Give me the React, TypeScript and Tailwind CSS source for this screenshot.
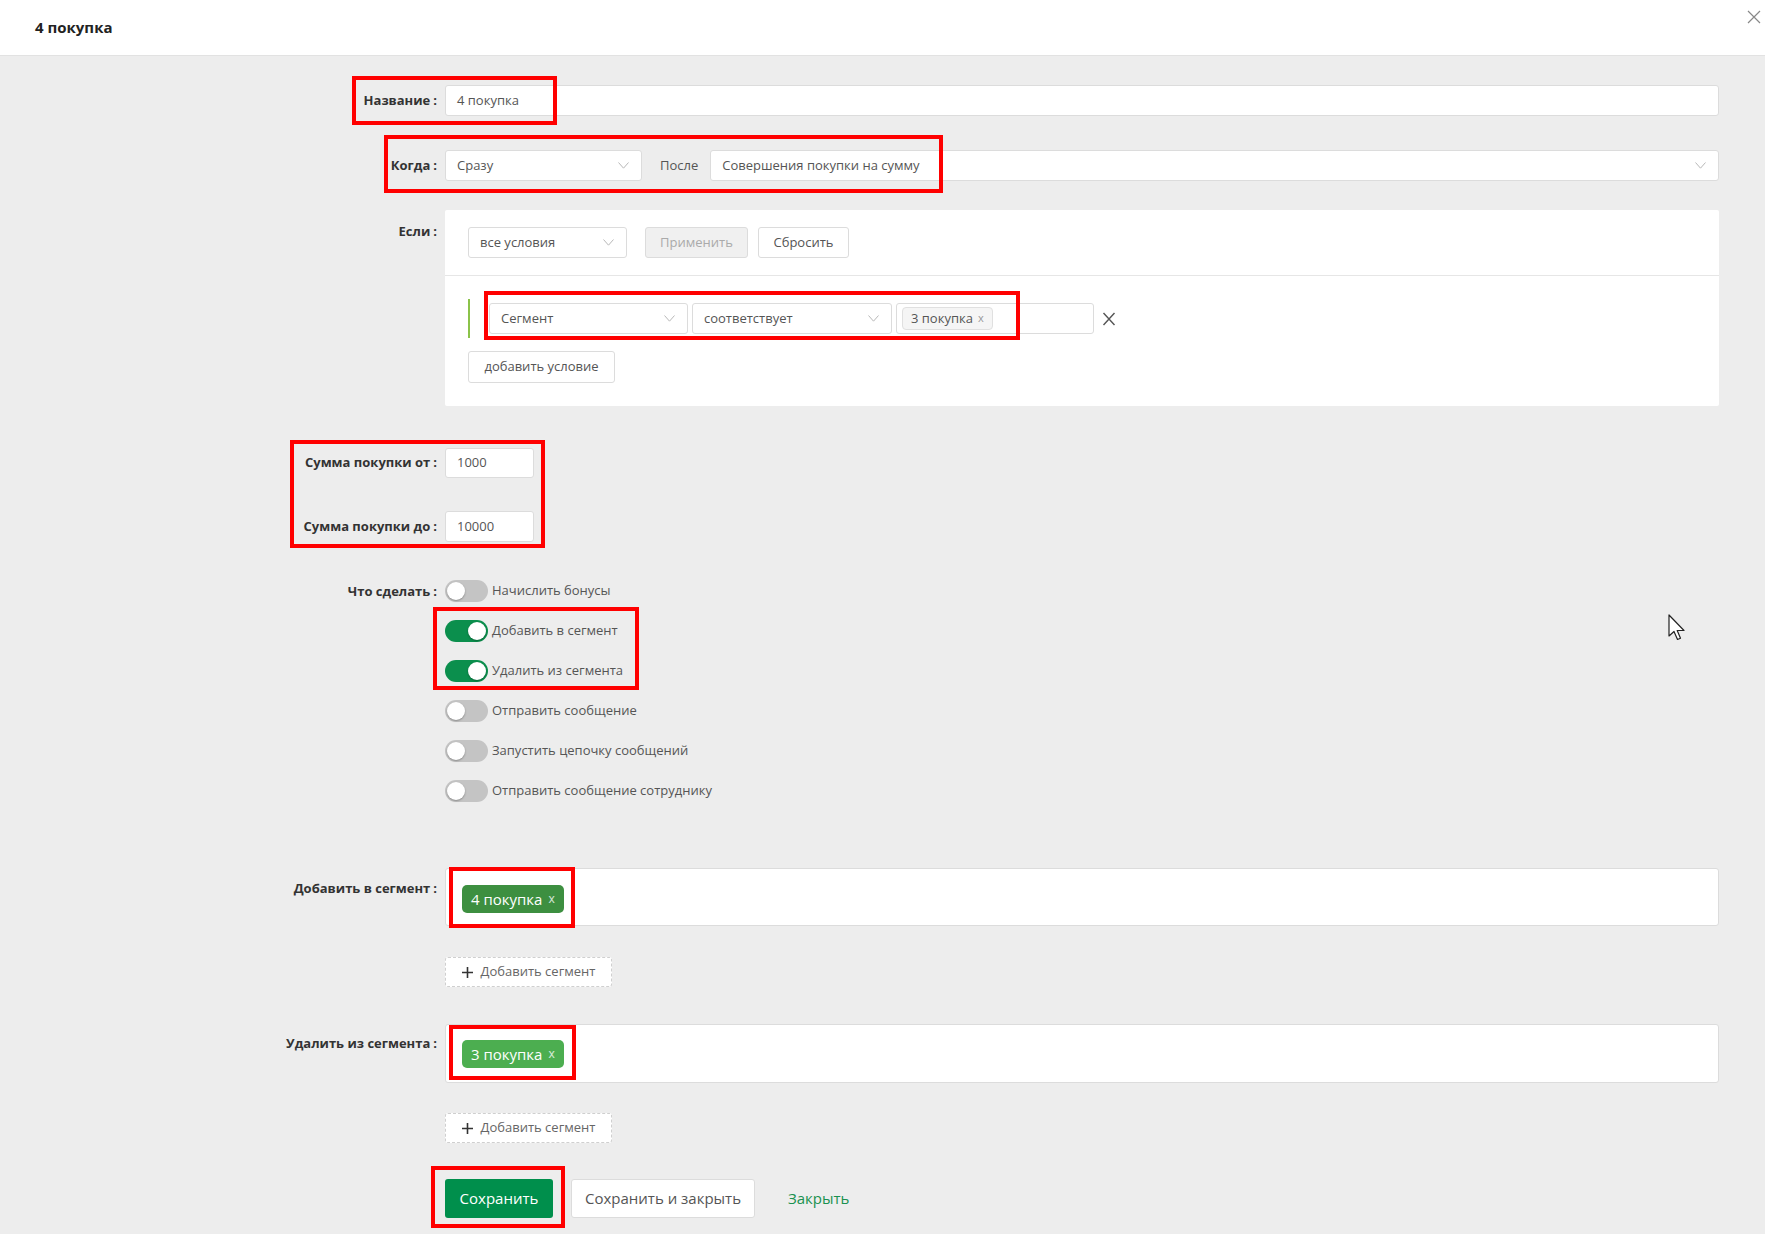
import React from "react";

const font = { fontFamily: '"Open Sans", "Noto Sans", sans-serif' };

function Chevron() {
  return (
    <svg width="11" height="7" viewBox="0 0 11 7" className="shrink-0">
      <path d="M0.5 0.5 L5.5 6.2 L10.5 0.5" fill="none" stroke="#b8b8b8" strokeWidth="1" />
    </svg>
  );
}

function Label({ children, className = "" }: { children: React.ReactNode; className?: string }) {
  return (
    <div className={`w-[445px] shrink-0 pr-[8px] text-right text-[13px] font-bold text-[#333] ${className}`}>
      {children}
      <span className="ml-[3px]">:</span>
    </div>
  );
}

function Select({ value, className = "" }: { value: string; className?: string }) {
  return (
    <div
      className={`flex h-[31px] items-center justify-between rounded-[3px] border border-[#dcdcdc] bg-white pl-[11px] pr-[12px] text-[13px] text-[#555] ${className}`}
    >
      <span>{value}</span>
      <Chevron />
    </div>
  );
}

function Toggle({ on, label }: { on?: boolean; label: string }) {
  return (
    <div className="flex h-[22px] items-center">
      <div
        className={`relative h-[22px] w-[43px] shrink-0 rounded-full ${on ? "bg-[#0b8f4d]" : "bg-[#c4c4c4]"}`}
      >
        <div
          className={`absolute top-[2px] h-[18px] w-[18px] rounded-full bg-white shadow-[0_1px_2px_rgba(0,0,0,0.3)] ${on ? "left-[23px]" : "left-[2px]"}`}
        />
      </div>
      <span className="ml-[4px] text-[13px] text-[#555]">{label}</span>
    </div>
  );
}

function AddSegment() {
  return (
    <div className="flex h-[30px] w-[167px] items-center justify-center gap-[8px] rounded-[3px] border border-dashed border-[#cfcfcf] bg-white text-[13px] text-[#666]">
      <svg width="11" height="11" viewBox="0 0 11 11">
        <path d="M5.5 0 V11 M0 5.5 H11" stroke="#333" strokeWidth="1.6" />
      </svg>
      Добавить сегмент
    </div>
  );
}

function Chip({ text, color }: { text: string; color: string }) {
  return (
    <div className={`flex h-[28px] items-center rounded-[5px] px-[9px] text-[15px] text-white ${color}`}>
      {text}
      <span className="ml-[6px] text-[12px] text-white/80">x</span>
    </div>
  );
}

export default function App() {
  return (
    <div className="relative min-h-[1234px] w-full overflow-hidden bg-[#ededed]" style={font}>
      {/* header */}
      <div className="flex h-[56px] items-center justify-between border-b border-[#e2e2e2] bg-white pl-[35px] pr-[4px]">
        <div className="text-[15px] font-bold text-[#222]">4 покупка</div>
        <svg width="14" height="14" viewBox="0 0 14 14" className="-mt-[22px]">
          <path d="M1 1 L13 13 M13 1 L1 13" stroke="#888" strokeWidth="1.2" />
        </svg>
      </div>

      <div className="pt-[29px] pb-[16px] pr-[46px]">
        {/* Название */}
        <div className="flex items-center">
          <Label>Название</Label>
          <div className="flex h-[31px] flex-1 items-center rounded-[3px] border border-[#dcdcdc] bg-white pl-[11px] text-[13px] text-[#555]">
            4 покупка
          </div>
        </div>

        {/* Когда */}
        <div className="mt-[34px] flex items-center">
          <Label>Когда</Label>
          <Select value="Сразу" className="w-[197px]" />
          <span className="ml-[18px] mr-[12px] text-[13px] text-[#555]">После</span>
          <Select value="Совершения покупки на сумму" className="flex-1" />
        </div>

        {/* Если */}
        <div className="mt-[29px] flex items-start">
          <Label className="pt-[12px]">Если</Label>
          <div className="flex-1 rounded-[2px] bg-white">
            <div className="flex items-center px-[23px] py-[17px]">
              <Select value="все условия" className="w-[159px]" />
              <div className="ml-[18px] flex h-[31px] w-[103px] items-center justify-center rounded-[3px] border border-[#dcdcdc] bg-[#f0f0f0] text-[13px] text-[#aaa]">
                Применить
              </div>
              <div className="ml-[10px] flex h-[31px] w-[91px] items-center justify-center rounded-[3px] border border-[#dcdcdc] bg-white text-[13px] text-[#555]">
                Сбросить
              </div>
            </div>
            <div className="border-t border-[#e6e6e6] px-[23px] pt-[23px] pb-[23px]">
              <div className="flex h-[39px] items-center border-l-2 border-[#8bc34a] pl-[19px]">
                <Select value="Сегмент" className="w-[199px]" />
                <Select value="соответствует" className="ml-[4px] w-[200px]" />
                <div className="ml-[4px] flex h-[31px] w-[198px] items-center rounded-[3px] border border-[#dcdcdc] bg-white pl-[5px]">
                  <div className="flex h-[23px] items-center rounded-[4px] border border-[#e0e0e0] bg-[#f5f5f5] px-[8px] text-[13px] text-[#555]">
                    3 покупка
                    <span className="ml-[5px] text-[11px] text-[#999]">x</span>
                  </div>
                </div>
                <svg width="14" height="14" viewBox="0 0 14 14" className="ml-[8px]">
                  <path d="M1.5 1 L12.5 13 M12.5 1 L1.5 13" stroke="#555" strokeWidth="1.4" />
                </svg>
              </div>
              <div className="mt-[13px] flex h-[32px] w-[147px] items-center justify-center rounded-[3px] border border-[#dcdcdc] bg-white text-[13px] text-[#555]">
                добавить условие
              </div>
            </div>
          </div>
        </div>

        {/* Сумма */}
        <div className="mt-[42px] flex items-center">
          <Label>Сумма покупки от</Label>
          <div className="flex h-[30px] w-[89px] items-center rounded-[3px] border border-[#dcdcdc] bg-white pl-[11px] text-[13px] text-[#555]">
            1000
          </div>
        </div>
        <div className="mt-[33px] flex items-center">
          <Label>Сумма покупки до</Label>
          <div className="flex h-[31px] w-[89px] items-center rounded-[3px] border border-[#dcdcdc] bg-white pl-[11px] text-[13px] text-[#555]">
            10000
          </div>
        </div>

        {/* Что сделать */}
        <div className="mt-[38px] flex items-start">
          <Label className="pt-[2px]">Что сделать</Label>
          <div className="flex flex-col gap-[18px]">
            <Toggle label="Начислить бонусы" />
            <Toggle on label="Добавить в сегмент" />
            <Toggle on label="Удалить из сегмента" />
            <Toggle label="Отправить сообщение" />
            <Toggle label="Запустить цепочку сообщений" />
            <Toggle label="Отправить сообщение сотруднику" />
          </div>
        </div>

        {/* Добавить в сегмент */}
        <div className="mt-[66px] flex items-start">
          <Label className="pt-[11px]">Добавить в сегмент</Label>
          <div className="flex h-[58px] flex-1 items-start rounded-[3px] border border-[#dcdcdc] bg-white pl-[16px] pt-[16px]">
            <Chip text="4 покупка" color="bg-[#3d8f40]" />
          </div>
        </div>
        <div className="mt-[31px] flex">
          <div className="w-[445px] shrink-0" />
          <AddSegment />
        </div>

        {/* Удалить из сегмента */}
        <div className="mt-[37px] flex items-start">
          <Label className="pt-[10px]">Удалить из сегмента</Label>
          <div className="flex h-[59px] flex-1 items-start rounded-[3px] border border-[#dcdcdc] bg-white pl-[16px] pt-[15px]">
            <Chip text="3 покупка" color="bg-[#4cae50]" />
          </div>
        </div>
        <div className="mt-[30px] flex">
          <div className="w-[445px] shrink-0" />
          <AddSegment />
        </div>

        {/* buttons */}
        <div className="mt-[36px] flex items-center">
          <div className="w-[445px] shrink-0" />
          <div className="flex h-[39px] w-[108px] items-center justify-center rounded-[3px] bg-[#008f4c] text-[15px] text-white">
            Сохранить
          </div>
          <div className="ml-[18px] flex h-[39px] w-[184px] items-center justify-center rounded-[3px] border border-[#dcdcdc] bg-white text-[15px] text-[#555]">
            Сохранить и закрыть
          </div>
          <div className="ml-[33px] text-[15px] text-[#1a9150]">Закрыть</div>
        </div>
      </div>

      {/* red annotation frames */}
      <div className="pointer-events-none absolute left-[352px] top-[76px] h-[49px] w-[205px] border-4 border-[#ff0000]" />
      <div className="pointer-events-none absolute left-[384px] top-[135px] h-[58px] w-[559px] border-4 border-[#ff0000]" />
      <div className="pointer-events-none absolute left-[484px] top-[291px] h-[49px] w-[536px] border-4 border-[#ff0000]" />
      <div className="pointer-events-none absolute left-[290px] top-[440px] h-[108px] w-[255px] border-4 border-[#ff0000]" />
      <div className="pointer-events-none absolute left-[433px] top-[607px] h-[83px] w-[206px] border-4 border-[#ff0000]" />
      <div className="pointer-events-none absolute left-[449px] top-[867px] h-[61px] w-[126px] border-4 border-[#ff0000]" />
      <div className="pointer-events-none absolute left-[449px] top-[1025px] h-[55px] w-[127px] border-4 border-[#ff0000]" />
      <div className="pointer-events-none absolute left-[431px] top-[1166px] h-[62px] w-[134px] border-4 border-[#ff0000]" />

      {/* mouse cursor */}
      <svg width="20" height="28" viewBox="0 0 20 28" className="pointer-events-none absolute left-[1668px] top-[614px]">
        <path
          d="M1 1 L1 22 L6 17.5 L9.5 25.5 L12.5 24.2 L9.2 16.5 L16 16.5 Z"
          fill="white"
          stroke="#222"
          strokeWidth="1.2"
          strokeLinejoin="round"
        />
      </svg>
    </div>
  );
}
